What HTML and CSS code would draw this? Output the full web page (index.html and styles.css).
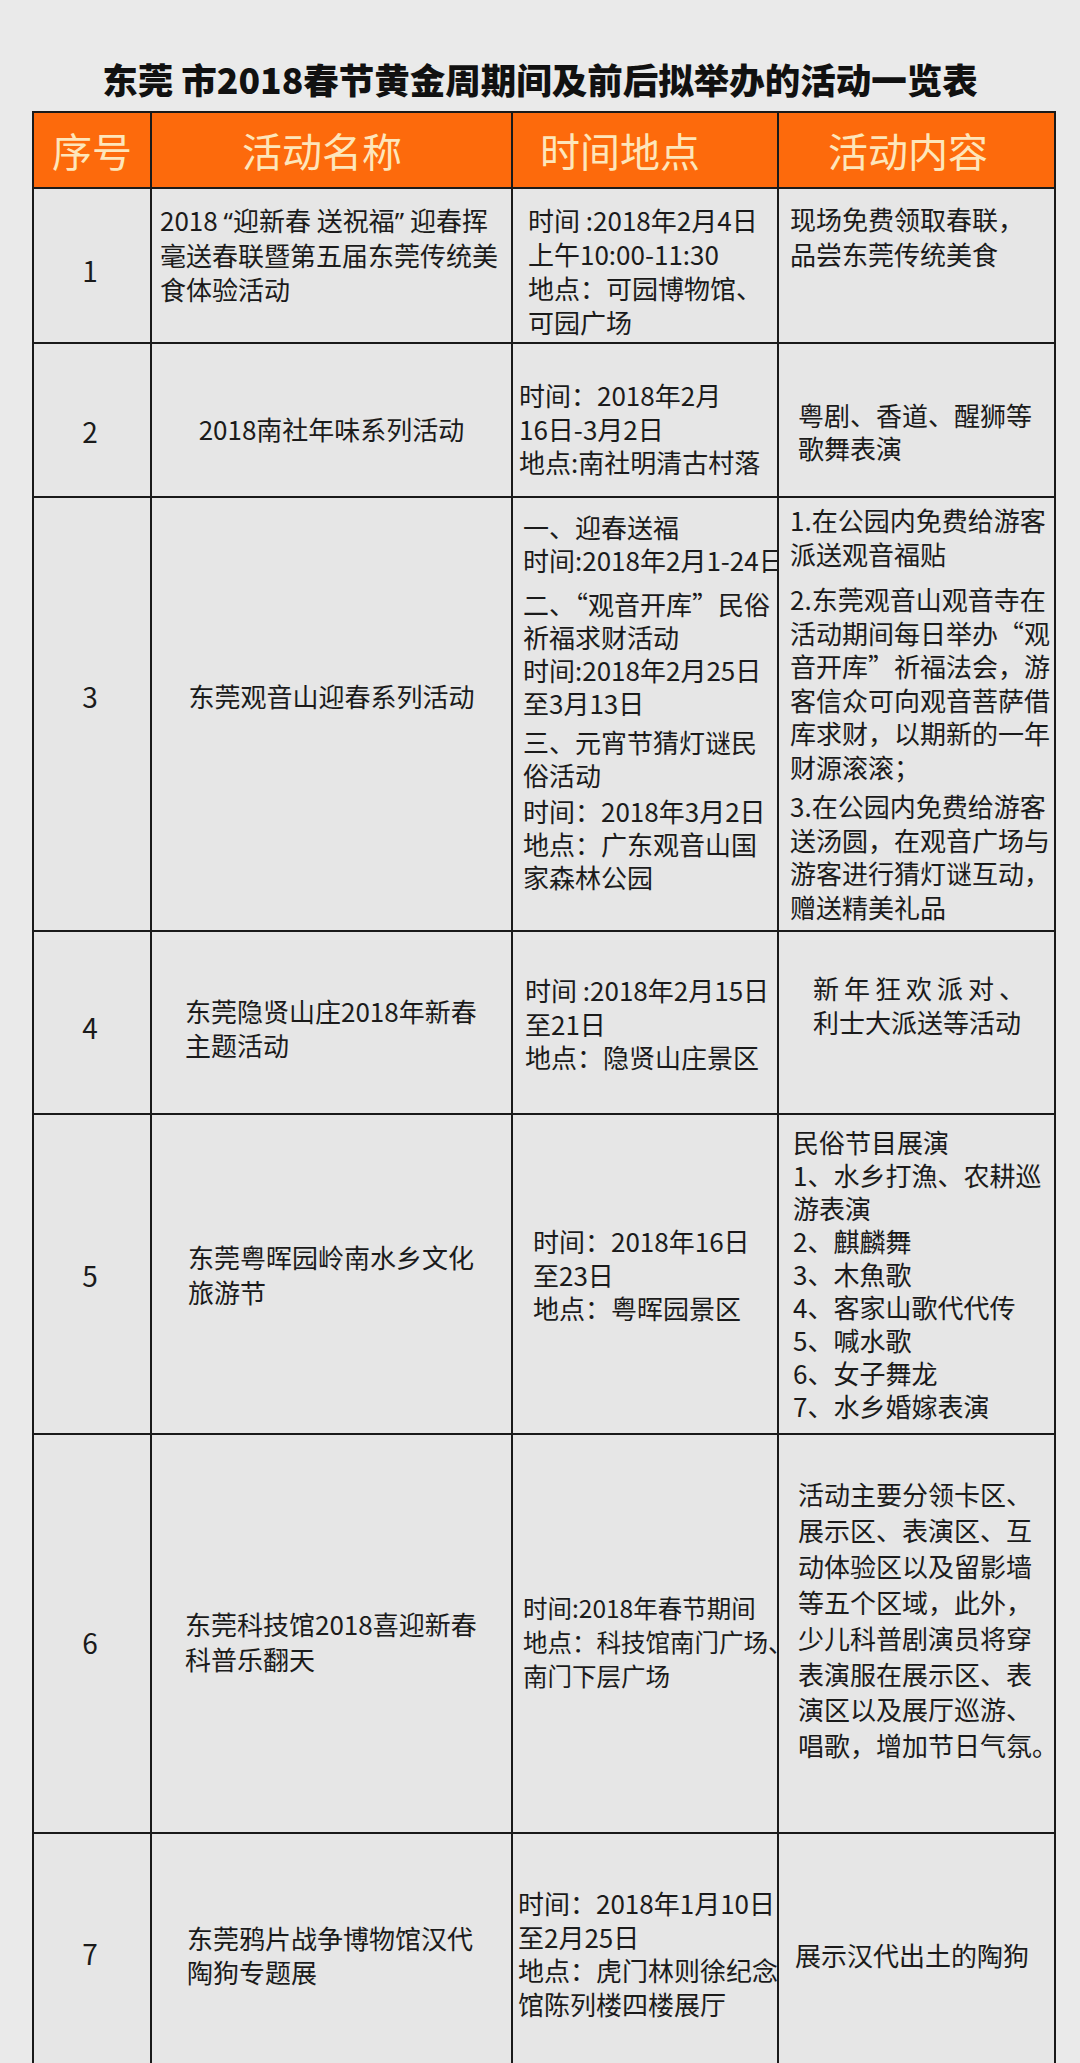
FILE: index.html
```html
<!DOCTYPE html>
<html lang="zh-CN">
<head>
<meta charset="utf-8">
<title>东莞市2018春节黄金周期间及前后拟举办的活动一览表</title>
<link rel="stylesheet" href="styles.css">
</head>
<body>
<h1 class="title">东莞 市2018春节黄金周期间及前后拟举办的活动一览表</h1>
<div class="sheet">
  <div class="cell head">序号</div>
  <div class="cell head head-name">活动名称</div>
  <div class="cell head head-time">时间地点</div>
  <div class="cell head head-content">活动内容</div>

  <div class="cell no r1-no">1</div>
  <div class="cell r1-name">2018 <span class="q">“</span>迎新春 送祝福<span class="q">”</span> 迎春挥<br>毫送春联暨第五届东莞传统美<br>食体验活动</div>
  <div class="cell r1-time">时间 :2018年2月4日<br>上午10:00-11:30<br>地点：可园博物馆、<br>可园广场</div>
  <div class="cell r1-content">现场免费领取春联，<br>品尝东莞传统美食</div>

  <div class="cell no r2-no">2</div>
  <div class="cell r2-name">2018南社年味系列活动</div>
  <div class="cell r2-time">时间：2018年2月<br>16日-3月2日<br>地点:南社明清古村落</div>
  <div class="cell r2-content">粤剧、香道、醒狮等<br>歌舞表演</div>

  <div class="cell no r3-no">3</div>
  <div class="cell r3-name">东莞观音山迎春系列活动</div>
  <div class="cell r3-time">
    <p>一、迎春送福<br>时间:2018年2月1-24日</p>
    <p class="gap-a">二、“观音开库”民俗<br>祈福求财活动<br>时间:2018年2月25日<br>至3月13日</p>
    <p class="gap-b">三、元宵节猜灯谜民<br>俗活动</p>
    <p class="gap-c">时间：2018年3月2日<br>地点：广东观音山国<br>家森林公园</p>
  </div>
  <div class="cell r3-content">
    <p>1.在公园内免费给游客<br>派送观音福贴</p>
    <p class="gap-d">2.东莞观音山观音寺在<br>活动期间每日举办“观<br>音开库”祈福法会，游<br>客信众可向观音菩萨借<br>库求财，以期新的一年<br>财源滚滚；</p>
    <p class="gap-e">3.在公园内免费给游客<br>送汤圆，在观音广场与<br>游客进行猜灯谜互动，<br>赠送精美礼品</p>
  </div>

  <div class="cell no r4-no">4</div>
  <div class="cell r4-name">东莞隐贤山庄2018年新春<br>主题活动</div>
  <div class="cell r4-time">时间 :2018年2月15日<br>至21日<br>地点：隐贤山庄景区</div>
  <div class="cell r4-content"><span class="spread">新年狂欢派对、</span><br>利士大派送等活动</div>

  <div class="cell no r5-no">5</div>
  <div class="cell r5-name">东莞粤晖园岭南水乡文化<br>旅游节</div>
  <div class="cell r5-time">时间：2018年16日<br>至23日<br>地点：粤晖园景区</div>
  <div class="cell r5-content">民俗节目展演<br>1、水乡打漁、农耕巡<br>游表演<br>2、麒麟舞<br>3、木魚歌<br>4、客家山歌代代传<br>5、喊水歌<br>6、女子舞龙<br>7、水乡婚嫁表演</div>

  <div class="cell no r6-no">6</div>
  <div class="cell r6-name">东莞科技馆2018喜迎新春<br>科普乐翻天</div>
  <div class="cell r6-time">时间:2018年春节期间<br>地点：科技馆南门广场、<br>南门下层广场</div>
  <div class="cell r6-content">活动主要分领卡区、<br>展示区、表演区、互<br>动体验区以及留影墙<br>等五个区域，此外，<br>少儿科普剧演员将穿<br>表演服在展示区、表<br>演区以及展厅巡游、<br>唱歌，增加节日气氛。</div>

  <div class="cell no r7-no">7</div>
  <div class="cell r7-name">东莞鸦片战争博物馆汉代<br>陶狗专题展</div>
  <div class="cell r7-time">时间：2018年1月10日<br>至2月25日<br>地点：虎门林则徐纪念<br>馆陈列楼四楼展厅</div>
  <div class="cell r7-content">展示汉代出土的陶狗</div>
</div>
</body>
</html>
```
FILE: styles.css
```css
* {
  box-sizing: border-box;
  margin: 0;
  padding: 0;
}

html,
body {
  background: #eaeaea;
}

body {
  width: 1080px;
  height: 2063px;
  overflow: hidden;
  font-family: "Noto Sans CJK SC", "Noto Sans", sans-serif;
  color: #1b1b1b;
}

.title {
  height: 111px;
  padding-top: 57px;
  line-height: 44px;
  text-align: center;
  font-size: 35.5px;
  font-weight: 900;
  color: #111;
}

.sheet {
  margin-left: 32px;
  width: 1024px;
  display: grid;
  grid-template-columns: 118px 361px 266px 277px;
  grid-template-rows: 76px 155px 154px 434px 183px 320px 399px 240px;
  border-left: 2px solid #1a1a1a;
  border-top: 2px solid #1a1a1a;
}

.cell {
  border-right: 2px solid #1a1a1a;
  border-bottom: 2px solid #1a1a1a;
  background: #e6e6e6;
  font-size: 26px;
  line-height: 34px;
  white-space: nowrap;
  overflow: visible;
}

.q {
  font-family: "Noto Sans", "DejaVu Sans", sans-serif;
}

.head {
  background: #fd6a0c;
  color: #fde6bb;
  font-size: 40px;
  line-height: 74px;
  text-align: center;
}

.head-name { padding-right: 19px; }
.head-time { padding-right: 50px; }
.head-content { padding-right: 17px; }

.no {
  text-align: center;
  font-size: 28px;
  padding-right: 4px;
}

/* row 1 */
.r1-no { padding-top: 64px; }
.r1-name { padding: 14px 0 0 8px; }
.r1-time { padding: 14px 0 0 15px; }
.r1-content { padding: 12px 0 0 11px; line-height: 35px; }

/* row 2 */
.r2-no { padding-top: 70px; }
.r2-name { padding-top: 68px; text-align: center; }
.r2-time { padding: 34px 0 0 6px; line-height: 33.5px; }
.r2-content { padding: 54px 0 0 19px; line-height: 33px; }

/* row 3 */
.r3-no { padding-top: 181px; }
.r3-name { padding-top: 181px; text-align: center; }
.r3-time { padding: 12px 0 0 10px; line-height: 33px; }
.r3-content { padding: 5px 0 0 11px; line-height: 33.5px; }
.gap-a { margin-top: 11px; }
.gap-b { margin-top: 6px; }
.gap-c { margin-top: 3px; }
.gap-d { margin-top: 12px; }
.gap-e { margin-top: 6px; }

/* row 4 */
.r4-no { padding-top: 78px; }
.r4-name { padding: 62px 0 0 33px; }
.r4-time { padding: 41px 0 0 12px; line-height: 33.5px; }
.r4-content { padding: 39px 0 0 34px; }
.spread { letter-spacing: 5px; }

/* row 5 */
.r5-no { padding-top: 143px; }
.r5-name { padding: 124px 0 0 36px; line-height: 35px; }
.r5-time { padding: 109px 0 0 20px; line-height: 33.5px; }
.r5-content { padding: 10px 0 0 14px; line-height: 33px; }

/* row 6 */
.r6-no { padding-top: 190px; }
.r6-name { padding: 171px 0 0 33px; line-height: 35px; }
.r6-time { padding: 156px 0 0 10px; font-size: 24.5px; }
.r6-content { padding: 41px 0 0 19px; line-height: 35.9px; }

/* row 7 */
.r7-no { padding-top: 102px; }
.r7-name { padding: 87px 0 0 35px; }
.r7-time { padding: 52px 0 0 5px; line-height: 33.5px; }
.r7-content { padding: 104px 0 0 16px; }
```
